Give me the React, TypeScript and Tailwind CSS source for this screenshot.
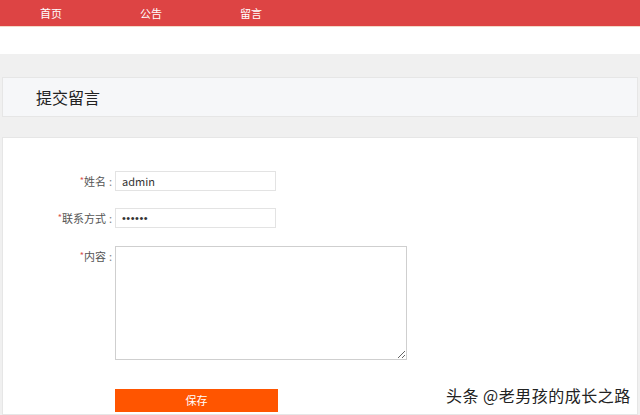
import React from "react";

const font = { fontFamily: '"Noto Sans CJK SC", "Noto Sans", sans-serif' };

function Row({ label, children, top = false }: { label: string; children: React.ReactNode; top?: boolean }) {
  return (
    <div className={`flex ${top ? "items-start" : "items-center"}`}>
      <div className="w-[112px] h-[20px] flex items-center justify-end pr-[3px] text-[11px] text-[#555]">
        <span className="text-[#d9534f] text-[9px] self-start mt-[3px]">*</span>
        <span>{label}</span>
        <span className="ml-[3px] text-[#888]">:</span>
      </div>
      {children}
    </div>
  );
}

export default function App() {
  return (
    <div className="w-[640px] h-[415px] bg-white flex flex-col overflow-hidden relative" style={font}>
      <nav className="h-[26px] bg-[#dd4444] flex items-center text-white text-[11px] shrink-0">
        <a className="ml-[40px] w-[100px]">首页</a>
        <a className="w-[100px]">公告</a>
        <a className="w-[100px]">留言</a>
      </nav>
      <div className="h-[28px] bg-white border-t border-[#f3d9c8] shrink-0" />
      <div className="flex-1 bg-[#f0f0f0] pt-[23px] flex flex-col">
        <div className="h-[40px] ml-[2px] mr-[2px] bg-[#f6f7f9] border border-[#e6e6e6] flex items-center pl-[33px] text-[16px] text-[#222] shrink-0">
          提交留言
        </div>
        <div className="h-[20px] shrink-0" />
        <div className="flex-1 ml-[2px] mr-[2px] bg-white border border-[#e6e6e6] pt-[33px] flex flex-col">
          <Row label="姓名">
            <input
              defaultValue="admin"
              className="w-[161px] h-[20px] border border-[#e3e3e3] px-[6px] text-[11px] text-[#333] outline-none"
            />
          </Row>
          <div className="h-[17px]" />
          <Row label="联系方式">
            <input
              defaultValue="••••••"
              className="w-[161px] h-[20px] border border-[#e3e3e3] px-[6px] text-[11px] text-[#333] outline-none tracking-[0.5px]"
              style={{ fontFamily: '"Liberation Sans", sans-serif' }}
            />
          </Row>
          <div className="h-[18px]" />
          <Row label="内容" top>
            <textarea className="w-[292px] h-[114px] border border-[#cfcfcf] outline-none" />
          </Row>
          <div className="pl-[112px] pt-[26px]">
            <button className="w-[163px] h-[23px] bg-[#ff5500] text-white text-[11px]">保存</button>
          </div>
        </div>
      </div>
      <div
        className="absolute left-[446px] top-[383px] text-[16px] text-[#222] tracking-[0.5px]"
        style={{ textShadow: "0 0 2px #fff, 0 0 2px #fff" }}
      >
        头条 @老男孩的成长之路
      </div>
    </div>
  );
}
